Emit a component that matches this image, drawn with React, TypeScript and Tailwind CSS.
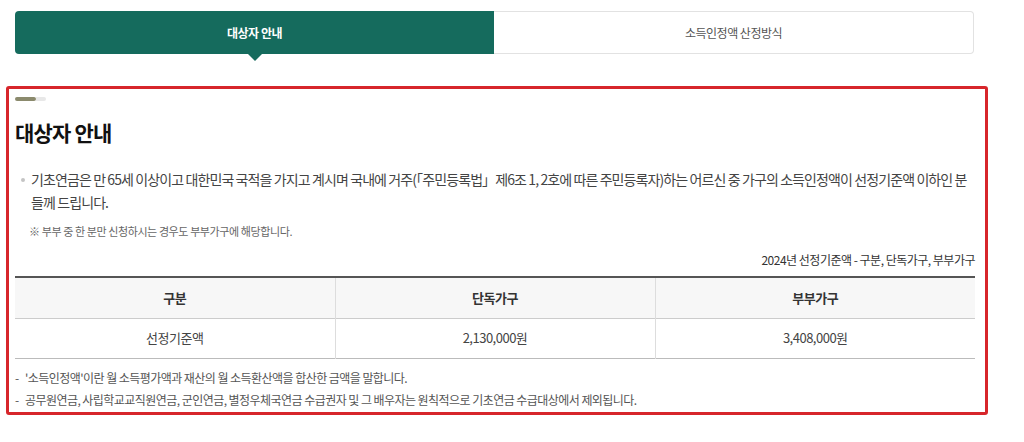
import React from 'react';

const rows = [{ label: '선정기준액', single: '2,130,000원', couple: '3,408,000원' }];

export default function App() {
  return (
    <div className="w-[1024px] h-[442px] bg-white text-[#333] font-['Noto_Sans_CJK_KR','Noto_Sans',sans-serif] overflow-hidden">
      {/* tabs */}
      <div className="pt-[11px] ml-[15px] w-[959px]">
        <div className="flex h-[43px]">
          <div className="relative flex-1 flex items-center justify-center bg-[#156b5d] rounded-l-[4px] text-white text-[12px] font-bold tracking-[-0.5px]">
            대상자 안내
            <span className="absolute left-1/2 -translate-x-1/2 top-full w-0 h-0 border-l-[7px] border-r-[7px] border-t-[7px] border-l-transparent border-r-transparent border-t-[#156b5d]" />
          </div>
          <div className="flex-1 flex items-center justify-center border border-l-0 border-[#e2e2e2] rounded-r-[4px] text-[12px] text-[#555] tracking-[-0.5px]">
            소득인정액 산정방식
          </div>
        </div>
      </div>

      {/* section */}
      <div className="mt-[32px] ml-[6px] w-[982px] h-[329px] border-[3px] border-[#d7262b] rounded-[3px] pl-[6px] pr-[10px]">
        <div className="flex mt-[8px]">
          <span className="w-[21px] h-[4px] rounded-full bg-[#8b8a6d]" />
          <span className="w-[10px] h-[4px] rounded-r-full bg-[#e8e8e8]" />
        </div>
        <h2 className="mt-[16px] text-[21px] leading-[30px] font-bold text-[#111] tracking-[-0.8px]">대상자 안내</h2>

        <div className="mt-[21px] flex text-[14px] leading-[23px] text-[#444] tracking-[-0.9px]">
          <span className="w-[16px] shrink-0 flex justify-center pt-[10px]">
            <span className="w-[4px] h-[4px] rounded-full bg-[#c4c4c4]" />
          </span>
          <p>
            기초연금은 만 65세 이상이고 대한민국 국적을 가지고 계시며 국내에 거주(「주민등록법」제6조 1, 2호에 따른 주민등록자)하는 어르신 중 가구의 소득인정액이 선정기준액 이하인 분들께 드립니다.
          </p>
        </div>
        <p className="mt-[9px] pl-[14px] text-[11px] leading-[16px] text-[#666] tracking-[-0.4px]">※ 부부 중 한 분만 신청하시는 경우도 부부가구에 해당합니다.</p>

        <p className="mt-[13px] text-right text-[12px] leading-[16px] text-[#333] tracking-[-0.5px]">2024년 선정기준액 - 구분, 단독가구, 부부가구</p>

        <table className="mt-[8px] w-full border-collapse text-[13px] tracking-[-0.5px] border-t-2 border-[#555]">
          <thead>
            <tr className="bg-[#f7f7f7] h-[41px] border-b border-[#ccc]">
              <th className="font-bold text-[#333] w-1/3">구분</th>
              <th className="font-bold text-[#333] w-1/3 border-l border-[#ddd]">단독가구</th>
              <th className="font-bold text-[#333] w-1/3 border-l border-[#ddd]">부부가구</th>
            </tr>
          </thead>
          <tbody>
            {rows.map((r) => (
              <tr key={r.label} className="h-[40px] border-b border-[#bbb] text-[#444]">
                <td className="text-center">{r.label}</td>
                <td className="text-center border-l border-[#ddd]">{r.single}</td>
                <td className="text-center border-l border-[#ddd]">{r.couple}</td>
              </tr>
            ))}
          </tbody>
        </table>

        <ul className="mt-[8px] text-[12px] leading-[22px] text-[#555] tracking-[-0.55px]">
          <li className="flex"><span className="w-[10px] shrink-0">-</span>'소득인정액'이란 월 소득평가액과 재산의 월 소득환산액을 합산한 금액을 말합니다.</li>
          <li className="flex"><span className="w-[10px] shrink-0">-</span>공무원연금, 사립학교교직원연금, 군인연금, 별정우체국연금 수급권자 및 그 배우자는 원칙적으로 기초연금 수급대상에서 제외됩니다.</li>
        </ul>
      </div>
    </div>
  );
}
